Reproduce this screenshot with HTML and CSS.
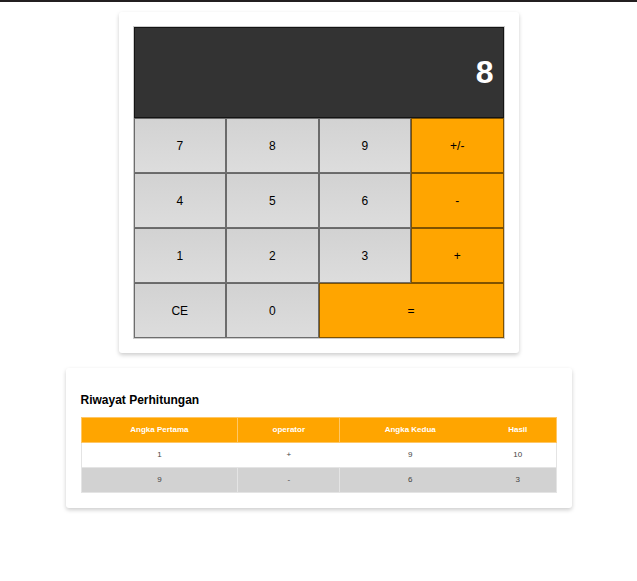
FILE: index.html
```html
<!DOCTYPE html>
<html lang="id">
<head>
<meta charset="utf-8">
<title>Kalkulator</title>
<link rel="stylesheet" href="styles.css">
</head>
<body>
<main>
  <section class="card calculator">
    <div class="keys">
      <output class="display">8</output>
      <button class="key">7</button>
      <button class="key">8</button>
      <button class="key">9</button>
      <button class="key operator">+/-</button>
      <button class="key">4</button>
      <button class="key">5</button>
      <button class="key">6</button>
      <button class="key operator">-</button>
      <button class="key">1</button>
      <button class="key">2</button>
      <button class="key">3</button>
      <button class="key operator">+</button>
      <button class="key">CE</button>
      <button class="key">0</button>
      <button class="key operator double">=</button>
    </div>
  </section>
  <section class="card history">
    <h2>Riwayat Perhitungan</h2>
    <table>
      <thead>
        <tr><th class="first">Angka Pertama</th><th class="op">operator</th><th class="second">Angka Kedua</th><th>Hasil</th></tr>
      </thead>
      <tbody>
        <tr><td>1</td><td>+</td><td>9</td><td>10</td></tr>
        <tr><td>9</td><td>-</td><td>6</td><td>3</td></tr>
      </tbody>
    </table>
  </section>
</main>
</body>
</html>
```
FILE: styles.css
```css
* { box-sizing: border-box; }

body {
  margin: 0;
  border-top: 2px solid #231f20;
  background: #fff;
  font-family: "Liberation Sans", Arial, sans-serif;
  font-size: 12px;
  color: #000;
}

main {
  display: flex;
  flex-direction: column;
  align-items: center;
  gap: 15px;
  padding: 10px 0;
}

.card {
  width: 100%;
  padding: 15px;
  border-radius: 3px;
  background: #fff;
  box-shadow: 0 2px 4px rgba(0, 0, 0, 0.2);
}

.calculator { max-width: 400px; }

.keys {
  display: grid;
  grid-template-columns: repeat(4, 1fr);
  grid-template-rows: 91px;
  grid-auto-rows: 55px;
  box-shadow: 0 0 0 1px #ccc;
}

.display {
  grid-column: 1 / -1;
  display: flex;
  align-items: center;
  justify-content: flex-end;
  padding: 0 9px;
  border: 1px solid #141414;
  background: #333;
  color: #fff;
  font-size: 32px;
  font-weight: bold;
}

.key {
  padding: 0;
  border: 1px solid rgba(0, 0, 0, 0.5);
  background: linear-gradient(#d2d2d2, #ddd) border-box;
  color: #000;
  font: inherit;
}

.operator { background: #ffa500; }

.double { grid-column: span 2; }

.history { max-width: 506px; }

h2 {
  margin: 10px 0;
  font-size: 12px;
  line-height: 14px;
}

table {
  width: 100%;
  table-layout: fixed;
  border-collapse: collapse;
  font-size: 8px;
  line-height: 10px;
  text-align: center;
}

th, td {
  height: 25px;
  padding: 0;
  border: 1px solid #e4e4e4;
  color: #444;
}

th {
  border-color: #ffc766;
  background: #ffa500;
  color: #fff;
}

tbody tr:nth-child(odd) td:not(:last-child) { border-right-color: #fff; }

tbody tr:nth-child(odd) td:not(:first-child) { border-left-color: #fff; }

tbody tr:nth-child(even) { background: #d2d2d2; }

th:nth-child(3), td:nth-child(3) { border-right: 0; }

th:nth-child(4), td:nth-child(4) { border-left: 0; }

.first { width: 33%; }
.op { width: 21.5%; }
.second { width: 29.5%; }
```
